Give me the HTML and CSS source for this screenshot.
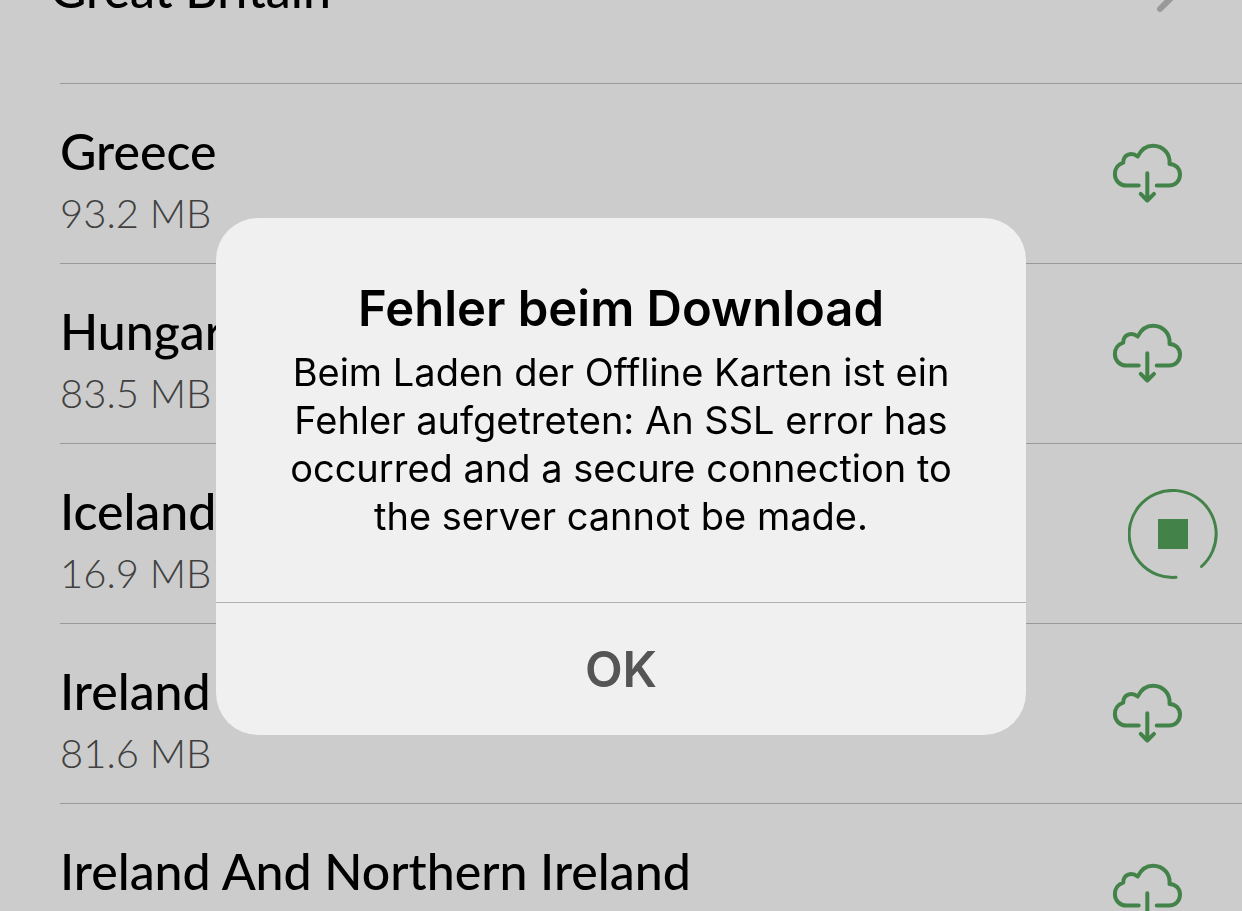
FILE: index.html
```
<!DOCTYPE html>
<html lang="de">
<head>
<meta charset="utf-8">
<title>Offline Karten</title>
<link rel="stylesheet" href="styles.css">
</head>
<body>
<svg class="symbols" aria-hidden="true">
  <symbol id="cloud" viewBox="0 0 72 64">
    <path d="M26.7 43.500H14.5C7.8 43.500 2.9 38.500 2.9 32.2C2.9 26.800 6 22.300 11.2 20.700C11.2 12.500 19.5 9.500 25.7 14.500C29 7.500 34.500 3.700 41 3.700C51.500 3.700 58.500 12 57.500 22C64 22 68 27 68 32.500C68 38.700 63.500 43.500 57 43.500H44.700M35.300 31.200V58M28.700 51.800L35.300 58.500L42 51.800"/>
  </symbol>
</svg>
<main class="list">
  <section class="row row-parent">
    <h2 class="name">Great Britain</h2>
    <a class="open" href="#" aria-label="Great Britain"><svg class="chevron" viewBox="0 0 28 48"><path d="M4 4L24 24L4 44"/></svg></a>
  </section>
  <section class="row">
    <div class="info"><h2 class="name">Greece</h2><p class="size">93.2 MB</p></div>
    <button class="load" aria-label="Greece laden"><svg class="cloud"><use href="#cloud"/></svg></button>
  </section>
  <section class="row">
    <div class="info"><h2 class="name">Hungary</h2><p class="size">83.5 MB</p></div>
    <button class="load" aria-label="Hungary laden"><svg class="cloud"><use href="#cloud"/></svg></button>
  </section>
  <section class="row">
    <div class="info"><h2 class="name">Iceland</h2><p class="size">16.9 MB</p></div>
    <button class="stop" aria-label="Iceland stoppen"><svg class="progress" viewBox="0 0 90 90"><path d="M48 88.300A43.500 43.500 0 1 1 73.500 77.500"/><rect x="30" y="30" width="30" height="30"/></svg></button>
  </section>
  <section class="row">
    <div class="info"><h2 class="name">Ireland</h2><p class="size">81.6 MB</p></div>
    <button class="load" aria-label="Ireland laden"><svg class="cloud"><use href="#cloud"/></svg></button>
  </section>
  <section class="row">
    <div class="info"><h2 class="name">Ireland And Northern Ireland</h2></div>
    <button class="load" aria-label="Ireland And Northern Ireland laden"><svg class="cloud"><use href="#cloud"/></svg></button>
  </section>
</main>
<div class="overlay">
  <div class="dialog" role="alertdialog" aria-labelledby="title" aria-describedby="message">
    <div class="content">
      <h1 class="title" id="title">Fehler beim Download</h1>
      <p class="message" id="message">Beim Laden der Offline Karten ist ein<br>Fehler aufgetreten: An SSL error has<br>occurred and a secure connection to<br>the server cannot be made.</p>
    </div>
    <button class="ok">OK</button>
  </div>
</div>
</body>
</html>
```
FILE: styles.css
```
* {
  box-sizing: border-box;
}

body {
  margin: 0;
  height: 100vh;
  overflow: hidden;
  background: #cccccc;
  color: #000000;
  font-family: Lato, "Open Sans", sans-serif;
}

h1, h2, p {
  margin: 0;
}

button {
  padding: 0;
  border: 0;
  background: none;
  font: inherit;
}

svg {
  display: block;
  fill: none;
  stroke: #43834a;
  stroke-linecap: round;
  stroke-linejoin: round;
}

.symbols {
  position: absolute;
  width: 0;
  height: 0;
}

.list {
  margin-top: -96px;
  padding-left: 60px;
}

.row {
  display: flex;
  align-items: center;
  justify-content: space-between;
  height: 180px;
  border-bottom: 1px solid #999999;
}

.row-parent {
  padding-bottom: 10px;
}

.row-parent .name {
  margin-left: -10px;
}

.info {
  align-self: flex-start;
  padding-top: 34px;
}

.name {
  font-size: 50px;
  line-height: 66px;
  font-weight: 500;
}

.size {
  color: #404040;
  font-size: 40px;
  line-height: 58px;
  font-weight: 300;
}

.open {
  margin-right: 58px;
}

.chevron {
  width: 28px;
  height: 48px;
  stroke: #999999;
  stroke-width: 6px;
}

.load {
  margin-right: 58px;
}

.cloud {
  width: 72px;
  height: 64px;
  stroke-width: 4px;
}

.stop {
  margin-right: 24px;
}

.progress {
  width: 90px;
  height: 90px;
  stroke-width: 3px;
}

.progress rect {
  fill: #43834a;
  stroke: none;
}

.overlay {
  position: fixed;
  inset: 0;
  display: flex;
  align-items: center;
  justify-content: center;
  padding-top: 42px;
}

.dialog {
  width: 810px;
  overflow: hidden;
  border-radius: 42px;
  background: #f0f0f0;
  font-family: Inter, sans-serif;
  text-align: center;
}

.content {
  padding: 61px 48px 62px;
}

.title {
  font-size: 49px;
  line-height: 60px;
  font-weight: 600;
}

.message {
  margin-top: 9px;
  font-size: 38px;
  line-height: 48px;
}

.ok {
  display: block;
  width: 100%;
  height: 133px;
  border-top: 1px solid #b0b0b0;
  color: #555555;
  font-size: 49px;
  font-weight: 600;
}
```
